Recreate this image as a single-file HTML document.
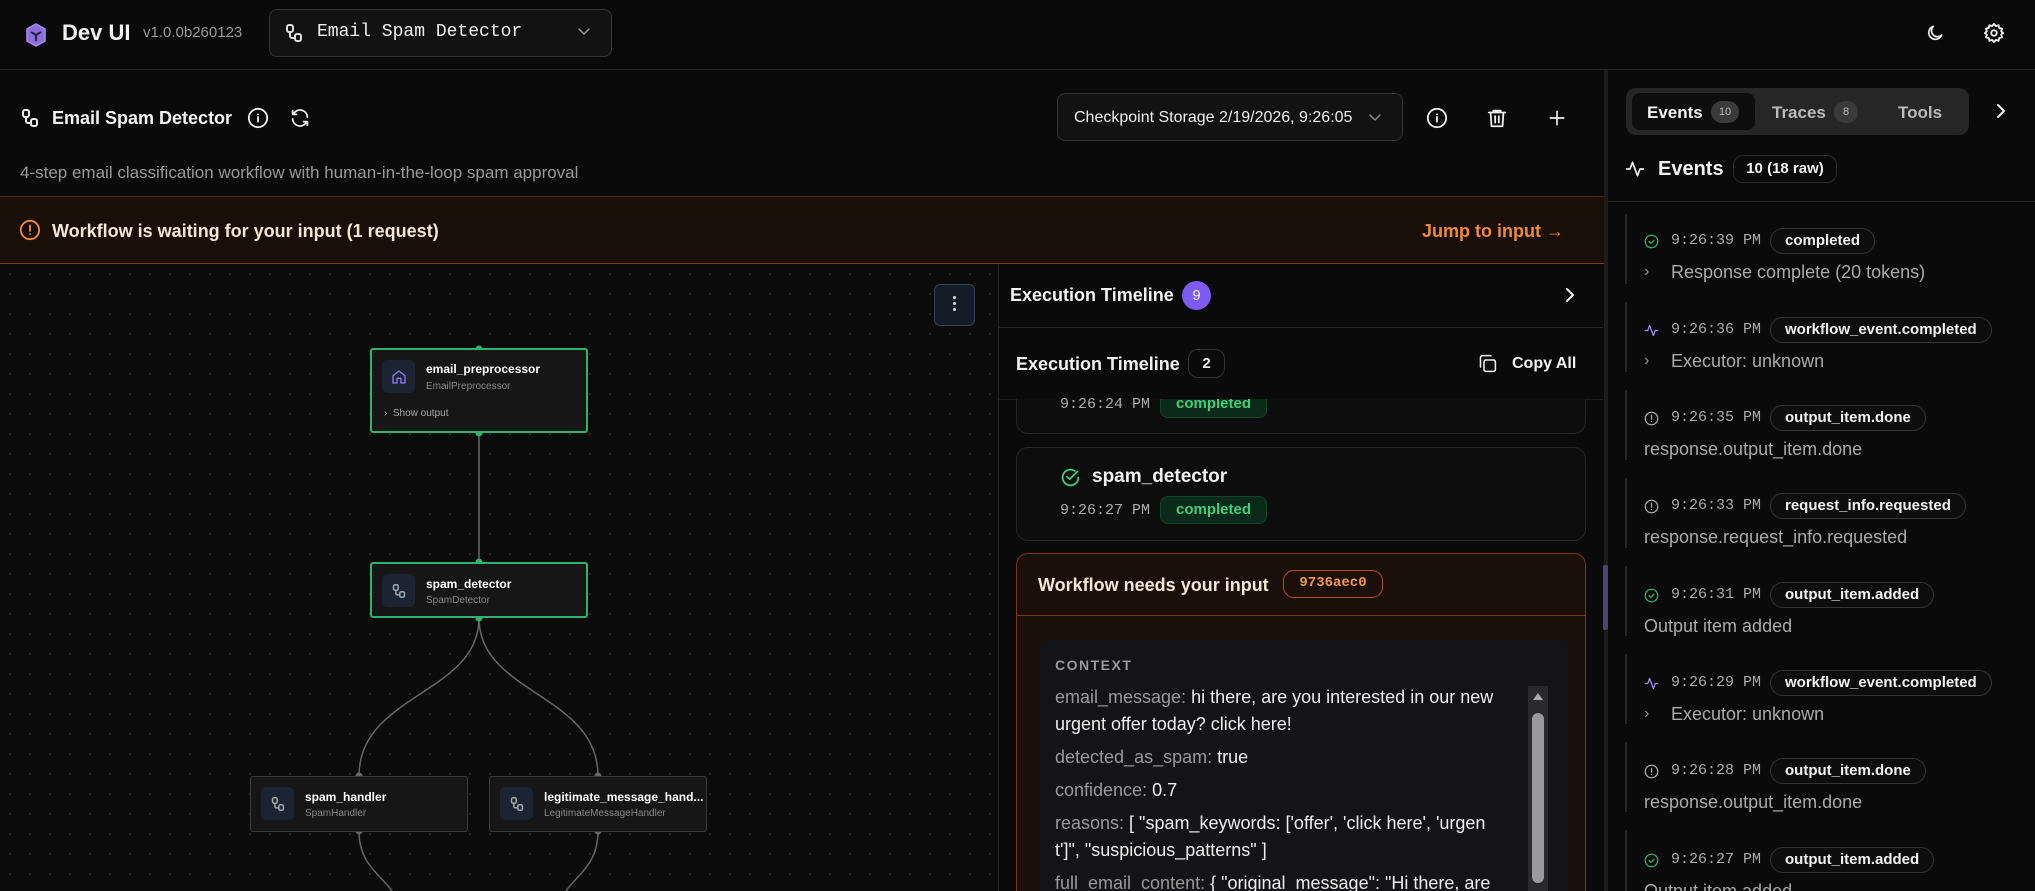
<!DOCTYPE html>
<html style="width:2035px;height:891px;overflow:hidden"><head><meta charset="utf-8"><style>
*{box-sizing:border-box;margin:0;padding:0}
body{width:2035px;height:891px;overflow:hidden;background:#0a0a0a;color:#f2f2f2;font-family:"Liberation Sans",sans-serif;position:relative}
.a{position:absolute}
.mono{font-family:"Liberation Mono",monospace}
svg{display:block}
.ic{stroke:currentColor;fill:none;stroke-width:2;stroke-linecap:round;stroke-linejoin:round}
.node{position:absolute;background:#161616;border:2px solid #2fb36d;border-radius:3px}
.node.g{border:1.5px solid #3a3a3a}
.nico{position:absolute;left:10px;width:33px;height:33px;background:#1c2333;border-radius:5px;display:flex;align-items:center;justify-content:center;color:#9aa}
.nt{position:absolute;left:54px;font-size:12px;font-weight:bold;color:#fff}
.ns{position:absolute;left:54px;font-size:10px;color:#888}
.ev{position:absolute;left:1644px}
.evt{position:absolute;left:27px;font-size:15px;color:#aaa;font-family:"Liberation Mono",monospace;top:-9px;white-space:nowrap}
.evb{position:absolute;left:126px;top:-13px;height:26px;border:1px solid #333;border-radius:13px;padding:0 14px;font-size:15px;font-weight:bold;line-height:24px;white-space:nowrap;background:#0d0d0d}
.evs{position:absolute;top:21px;font-size:18px;color:#aaa;white-space:nowrap}
.bar{position:absolute;left:1625px;width:2px;background:#262626}
.ctx{font-size:18px;color:#eee;line-height:33px}
.ctx b{font-weight:normal;color:#999}
</style></head><body>

<div class="a" style="left:0;top:0;width:2035px;height:70px;border-bottom:1px solid #262626"></div>
<svg class="a" style="left:24px;top:22px" width="24" height="26" viewBox="0 0 24 26"><path d="M12 2 L21 7 V19 L12 24 L3 19 V7 Z" fill="#8b6fd6" stroke="#a78bfa" stroke-width="1.5"/><path d="M7 10 L12 13 L17 10 M12 13 V19" stroke="#2a1f4a" stroke-width="2" fill="none"/></svg>
<div class="a" style="left:62px;top:20px;font-size:22px;font-weight:bold">Dev UI</div>
<div class="a" style="left:143px;top:24px;font-size:15px;color:#999">v1.0.0b260123</div>
<div class="a" style="left:269px;top:9px;width:343px;height:48px;border:1px solid #333;border-radius:8px;background:#121212"></div>
<svg class="a ic" style="left:285px;top:23px;color:#ddd" width="18" height="20" viewBox="0 0 18 20"><rect x="2" y="2" width="6" height="7" rx="2"/><rect x="10" y="11" width="6" height="7" rx="2"/><path d="M5 9v4a2 2 0 0 0 2 2h3"/></svg>
<div class="a mono" style="left:317px;top:22px;font-size:18px;color:#eee">Email Spam Detector</div>
<svg class="a ic" style="left:577px;top:27px;color:#999;stroke-width:1.5" width="14" height="10" viewBox="0 0 14 10"><path d="M2 2l5 5 5-5"/></svg>
<svg class="a ic" style="left:1925px;top:22px;color:#eee" width="20" height="22" viewBox="0 0 24 24"><path d="M20 14.5A8 8 0 1 1 10 4a6.5 6.5 0 0 0 10 10.5z"/></svg>
<svg class="a ic" style="left:1983px;top:22px;color:#eee" width="22" height="22" viewBox="0 0 24 24"><circle cx="12" cy="12" r="3"/><path d="M12 2l2 2.5 3-1 .7 3.1 3.1.7-1 3L22 12l-2.2 1.7 1 3-3.1.7-.7 3.1-3-1L12 22l-2-2.5-3 1-.7-3.1-3.1-.7 1-3L2 12l2.2-1.7-1-3 3.1-.7.7-3.1 3 1z"/></svg>

<svg class="a ic" style="left:21px;top:107px;color:#eee" width="18" height="22" viewBox="0 0 18 20"><rect x="2" y="2" width="6" height="7" rx="2"/><rect x="10" y="11" width="6" height="7" rx="2"/><path d="M5 9v4a2 2 0 0 0 2 2h3"/></svg>
<div class="a" style="left:52px;top:108px;font-size:18px;font-weight:bold">Email Spam Detector</div>
<svg class="a ic" style="left:247px;top:107px;color:#eee" width="22" height="22" viewBox="0 0 24 24"><circle cx="12" cy="12" r="10"/><path d="M12 16v-5M12 8h.01"/></svg>
<svg class="a ic" style="left:289px;top:107px;color:#eee" width="22" height="22" viewBox="0 0 24 24"><path d="M20 11a8 8 0 0 0-14-5l-2 2M4 4v4h4M4 13a8 8 0 0 0 14 5l2-2M20 20v-4h-4"/></svg>
<div class="a" style="left:20px;top:163px;font-size:17px;color:#999">4-step email classification workflow with human-in-the-loop spam approval</div>

<div class="a" style="left:1057px;top:93px;width:346px;height:48px;border:1px solid #333;border-radius:8px;background:#121212"></div>
<div class="a" style="left:1074px;top:109px;font-size:16px;color:#eee">Checkpoint Storage 2/19/2026, 9:26:05</div>
<svg class="a ic" style="left:1368px;top:113px;color:#888;stroke-width:1.5" width="14" height="10" viewBox="0 0 14 10"><path d="M2 2l5 5 5-5"/></svg>
<svg class="a ic" style="left:1426px;top:107px;color:#eee" width="22" height="22" viewBox="0 0 24 24"><circle cx="12" cy="12" r="10"/><path d="M12 16v-5M12 8h.01"/></svg>
<svg class="a ic" style="left:1486px;top:106px;color:#eee" width="22" height="24" viewBox="0 0 24 24"><path d="M3 6h18M8 6V4h8v2M5 6l1 15h12l1-15M10 10v7M14 10v7"/></svg>
<svg class="a ic" style="left:1547px;top:108px;color:#eee" width="20" height="20" viewBox="0 0 24 24"><path d="M12 4v16M4 12h16"/></svg>

<div class="a" style="left:0;top:196px;width:1604px;height:68px;background:#1a0f08;border-top:1px solid #4a2414;border-bottom:1px solid #8a3a18"></div>
<svg class="a ic" style="left:19px;top:219px;color:#f08a3c" width="22" height="22" viewBox="0 0 24 24"><circle cx="12" cy="12" r="10"/><path d="M12 7v6M12 16.5h.01"/></svg>
<div class="a" style="left:52px;top:221px;font-size:18px;font-weight:bold;color:#f5e6d6">Workflow is waiting for your input (1 request)</div>
<div class="a" style="left:1422px;top:221px;font-size:18px;font-weight:bold;color:#ee8a3a">Jump to input →</div>

<div class="a" style="left:0;top:264px;width:998px;height:627px;background-color:#0b0b0b;background-image:radial-gradient(#2a2a2a 1px,transparent 1.2px);background-size:20px 20px"></div>
<div class="a" style="left:934px;top:284px;width:41px;height:42px;border:1px solid #334155;border-radius:6px;background:#141c28"></div>
<div class="a" style="left:953px;top:296px;width:3px;height:3px;background:#ddd;border-radius:2px;box-shadow:0 6px 0 #ddd,0 12px 0 #ddd"></div>
<svg class="a" style="left:0;top:264px" width="998" height="627"><g fill="none" stroke="#666" stroke-width="1.5"><path d="M479 169V298"/><path d="M479 354C479 430 359 430 359 512M479 354C479 430 598 430 598 512"/><path d="M359 567C359 600 380 610 392 627M598 567C598 600 578 610 566 627"/></g><g fill="#2fb36d"><circle cx="479" cy="85" r="3.5"/><circle cx="479" cy="169" r="3.5"/><circle cx="479" cy="298" r="3.5"/><circle cx="479" cy="354" r="3.5"/></g><g fill="#666"><circle cx="359" cy="512" r="3.5"/><circle cx="598" cy="512" r="3.5"/><circle cx="359" cy="567" r="3.5"/><circle cx="598" cy="567" r="3.5"/></g></svg>
<div class="node" style="left:370px;top:348px;width:218px;height:85px"><div class="nico" style="top:10px;color:#8b7cf0"><svg class="ic" width="16" height="16" viewBox="0 0 24 24"><path d="M3 10l9-7 9 7v11h-6v-7H9v7H3z"/></svg></div><div class="nt" style="top:12px">email_preprocessor</div><div class="ns" style="top:31px">EmailPreprocessor</div><div class="a" style="left:12px;top:58px;font-size:10px;color:#aaa">›&nbsp; Show output</div></div>
<div class="node" style="left:370px;top:562px;width:218px;height:56px"><div class="nico" style="top:10px"><svg class="ic" width="14" height="16" viewBox="0 0 18 20"><rect x="2" y="2" width="6" height="7" rx="2"/><rect x="10" y="11" width="6" height="7" rx="2"/><path d="M5 9v4a2 2 0 0 0 2 2h3"/></svg></div><div class="nt" style="top:13px">spam_detector</div><div class="ns" style="top:31px">SpamDetector</div></div>
<div class="node g" style="left:250px;top:776px;width:218px;height:56px"><div class="nico" style="top:10px"><svg class="ic" width="14" height="16" viewBox="0 0 18 20"><rect x="2" y="2" width="6" height="7" rx="2"/><rect x="10" y="11" width="6" height="7" rx="2"/><path d="M5 9v4a2 2 0 0 0 2 2h3"/></svg></div><div class="nt" style="top:13px">spam_handler</div><div class="ns" style="top:31px">SpamHandler</div></div>
<div class="node g" style="left:489px;top:776px;width:218px;height:56px"><div class="nico" style="top:10px"><svg class="ic" width="14" height="16" viewBox="0 0 18 20"><rect x="2" y="2" width="6" height="7" rx="2"/><rect x="10" y="11" width="6" height="7" rx="2"/><path d="M5 9v4a2 2 0 0 0 2 2h3"/></svg></div><div class="nt" style="top:13px">legitimate_message_hand...</div><div class="ns" style="top:31px">LegitimateMessageHandler</div></div>

<div class="a" style="left:998px;top:264px;width:606px;height:627px;background:#0a0a0a;border-left:1px solid #262626"></div>
<div class="a" style="left:1010px;top:285px;font-size:18px;font-weight:bold">Execution Timeline</div>
<div class="a" style="left:1182px;top:281px;width:29px;height:29px;border-radius:50%;background:#7c5cf0;font-size:15px;text-align:center;line-height:29px">9</div>
<svg class="a ic" style="left:1563px;top:287px;color:#eee" width="14" height="16" viewBox="0 0 14 16"><path d="M4 2l6 6-6 6"/></svg>
<div class="a" style="left:999px;top:327px;width:604px;height:1px;background:#262626"></div>
<div class="a" style="left:1016px;top:354px;font-size:18px;font-weight:bold">Execution Timeline</div>
<div class="a" style="left:1188px;top:349px;width:37px;height:29px;border:1px solid #333;border-radius:10px;font-size:15px;font-weight:bold;text-align:center;line-height:27px">2</div>
<svg class="a ic" style="left:1477px;top:353px;color:#eee;stroke-width:1.8" width="21" height="21" viewBox="0 0 24 24"><rect x="8" y="8" width="13" height="13" rx="2"/><path d="M4 16V5a2 2 0 0 1 2-2h10"/></svg>
<div class="a" style="left:1512px;top:355px;font-size:16px;font-weight:bold">Copy All</div>
<div class="a" style="left:999px;top:399px;width:604px;height:1px;background:#1f1f1f"></div>
<div class="a" style="left:1016px;top:399px;width:570px;height:35px;border:1px solid #262626;border-top:none;border-radius:0 0 12px 12px;background:#0d0d0d"></div>
<div class="a mono" style="left:1060px;top:396px;font-size:15px;color:#aaa">9:26:24 PM</div>
<div class="a" style="left:1160px;top:399px;width:107px;height:19px;background:#0c2a1a;border:1px solid #14452a;border-top:none;border-radius:0 0 8px 8px;color:#3fd07a;font-size:15px;font-weight:bold;text-align:center;line-height:10px;overflow:hidden">completed</div>
<div class="a" style="left:1016px;top:447px;width:570px;height:94px;border:1px solid #262626;border-radius:12px;background:#0d0d0d"></div>
<svg class="a ic" style="left:1060px;top:467px;color:#3fd07a" width="21" height="21" viewBox="0 0 24 24"><path d="M21 12a9 9 0 1 1-4-7.5"/><path d="M8 11l3 3 9-9"/></svg>
<div class="a" style="left:1092px;top:466px;font-size:19px;font-weight:bold">spam_detector</div>
<div class="a mono" style="left:1060px;top:502px;font-size:15px;color:#aaa">9:26:27 PM</div>
<div class="a" style="left:1160px;top:496px;width:107px;height:28px;background:#0c2a1a;border:1px solid #14452a;border-radius:8px;color:#3fd07a;font-size:15px;font-weight:bold;text-align:center;line-height:26px">completed</div>
<div class="a" style="left:1016px;top:553px;width:570px;height:338px;border:1.5px solid #7a3416;border-bottom:none;border-radius:12px 12px 0 0;background:#1a0f09"></div>
<div class="a" style="left:1038px;top:575px;font-size:18px;font-weight:bold;color:#f5e6d6;white-space:nowrap">Workflow needs your input</div>
<div class="a mono" style="left:1283px;top:570px;width:100px;height:28px;border:1.5px solid #b8501e;border-radius:11px;color:#f29a4a;font-size:14px;font-weight:bold;text-align:center;line-height:25px">9736aec0</div>
<div class="a" style="left:1017px;top:615px;width:568px;height:1px;background:#7a3416"></div>
<div class="a" style="left:1040px;top:640px;width:528px;height:251px;background:#141416;border-radius:6px 6px 0 0"></div>
<div class="a" style="left:1055px;top:657px;font-size:14px;font-weight:bold;color:#999;letter-spacing:1.5px">CONTEXT</div>
<div class="a ctx" style="left:1055px;top:684px;width:460px"><div style="line-height:27px"><b>email_message:</b> hi there, are you interested in our new urgent offer today? click here!</div><div style="margin-top:3px"><b>detected_as_spam:</b> true</div><div><b>confidence:</b> 0.7</div><div style="line-height:27px;margin-top:3px"><b>reasons:</b> [ "spam_keywords: ['offer', 'click here', 'urgen t']", "suspicious_patterns" ]</div><div style="margin-top:3px;white-space:nowrap"><b>full_email_content:</b> { "original_message": "Hi there, are</div></div>
<div class="a" style="left:1528px;top:686px;width:20px;height:205px;background:#2a2a2c"></div>
<div class="a" style="left:1533px;top:693px;width:0;height:0;border-left:5px solid transparent;border-right:5px solid transparent;border-bottom:7px solid #aaa"></div>
<div class="a" style="left:1532px;top:713px;width:12px;height:170px;background:#9a9a9a;border-radius:6px"></div>

<div class="a" style="left:1604px;top:70px;width:4px;height:821px;background:#1c1c1c"></div>
<div class="a" style="left:1603px;top:565px;width:5px;height:65px;background:#4a4570;border-radius:2px"></div>
<div class="a" style="left:1626px;top:88px;width:343px;height:47px;border-radius:10px;background:#262626"></div>
<div class="a" style="left:1632px;top:93px;width:123px;height:37px;border-radius:8px;background:#0d0d0d"></div>
<div class="a" style="left:1647px;top:103px;font-size:17px;font-weight:bold">Events</div>
<div class="a" style="left:1711px;top:101px;width:28px;height:22px;border-radius:11px;background:#3a3a3a;font-size:11px;color:#bbb;text-align:center;line-height:22px">10</div>
<div class="a" style="left:1772px;top:103px;font-size:17px;font-weight:bold;color:#bbb">Traces</div>
<div class="a" style="left:1834px;top:101px;width:24px;height:22px;border-radius:11px;background:#3a3a3a;font-size:11px;color:#bbb;text-align:center;line-height:22px">8</div>
<div class="a" style="left:1898px;top:103px;font-size:17px;font-weight:bold;color:#bbb">Tools</div>
<svg class="a ic" style="left:1995px;top:103px;color:#eee" width="12" height="16" viewBox="0 0 12 16"><path d="M3 2l6 6-6 6"/></svg>
<svg class="a ic" style="left:1625px;top:158px;color:#eee" width="20" height="22" viewBox="0 0 24 24"><path d="M2 12h4l3-8 6 16 3-8h4"/></svg>
<div class="a" style="left:1658px;top:158px;font-size:20px;font-weight:bold">Events</div>
<div class="a" style="left:1733px;top:155px;width:104px;height:28px;border:1px solid #2a2a2a;border-radius:10px;font-size:15px;font-weight:bold;text-align:center;line-height:26px">10 (18 raw)</div>
<div class="a" style="left:1608px;top:201px;width:427px;height:1px;background:#262626"></div>

<div class="bar" style="top:214px;height:70px"></div><div class="bar" style="top:302px;height:70px"></div><div class="bar" style="top:390px;height:70px"></div><div class="bar" style="top:478px;height:70px"></div><div class="bar" style="top:566px;height:70px"></div><div class="bar" style="top:654px;height:70px"></div><div class="bar" style="top:742px;height:70px"></div><div class="bar" style="top:830px;height:61px"></div>

<div class="ev" style="top:241px"><svg class="a ic" style="left:0;top:-7px;color:#2fb36d" width="15" height="15" viewBox="0 0 24 24"><circle cx="12" cy="12" r="10"/><path d="M8 12l3 3 5-5"/></svg><div class="evt">9:26:39 PM</div><div class="evb">completed</div><div class="evs" style="left:0;color:#999;font-size:16px;top:22px">›</div><div class="evs" style="left:27px">Response complete (20 tokens)</div></div>
<div class="ev" style="top:330px"><svg class="a ic" style="left:0;top:-7px;color:#a78bfa" width="15" height="15" viewBox="0 0 24 24"><path d="M2 12h4l3-8 6 16 3-8h4"/></svg><div class="evt">9:26:36 PM</div><div class="evb">workflow_event.completed</div><div class="evs" style="left:0;color:#999;font-size:16px;top:22px">›</div><div class="evs" style="left:27px">Executor: unknown</div></div>
<div class="ev" style="top:418px"><svg class="a ic" style="left:0;top:-7px;color:#aaa" width="15" height="15" viewBox="0 0 24 24"><circle cx="12" cy="12" r="10"/><path d="M12 7v6M12 16.5h.01"/></svg><div class="evt">9:26:35 PM</div><div class="evb">output_item.done</div><div class="evs" style="left:0">response.output_item.done</div></div>
<div class="ev" style="top:506px"><svg class="a ic" style="left:0;top:-7px;color:#aaa" width="15" height="15" viewBox="0 0 24 24"><circle cx="12" cy="12" r="10"/><path d="M12 7v6M12 16.5h.01"/></svg><div class="evt">9:26:33 PM</div><div class="evb">request_info.requested</div><div class="evs" style="left:0">response.request_info.requested</div></div>
<div class="ev" style="top:595px"><svg class="a ic" style="left:0;top:-7px;color:#2fb36d" width="15" height="15" viewBox="0 0 24 24"><circle cx="12" cy="12" r="10"/><path d="M8 12l3 3 5-5"/></svg><div class="evt">9:26:31 PM</div><div class="evb">output_item.added</div><div class="evs" style="left:0">Output item added</div></div>
<div class="ev" style="top:683px"><svg class="a ic" style="left:0;top:-7px;color:#a78bfa" width="15" height="15" viewBox="0 0 24 24"><path d="M2 12h4l3-8 6 16 3-8h4"/></svg><div class="evt">9:26:29 PM</div><div class="evb">workflow_event.completed</div><div class="evs" style="left:0;color:#999;font-size:16px;top:22px">›</div><div class="evs" style="left:27px">Executor: unknown</div></div>
<div class="ev" style="top:771px"><svg class="a ic" style="left:0;top:-7px;color:#aaa" width="15" height="15" viewBox="0 0 24 24"><circle cx="12" cy="12" r="10"/><path d="M12 7v6M12 16.5h.01"/></svg><div class="evt">9:26:28 PM</div><div class="evb">output_item.done</div><div class="evs" style="left:0">response.output_item.done</div></div>
<div class="ev" style="top:860px"><svg class="a ic" style="left:0;top:-7px;color:#2fb36d" width="15" height="15" viewBox="0 0 24 24"><circle cx="12" cy="12" r="10"/><path d="M8 12l3 3 5-5"/></svg><div class="evt">9:26:27 PM</div><div class="evb">output_item.added</div><div class="evs" style="left:0">Output item added</div></div>
</body></html>
